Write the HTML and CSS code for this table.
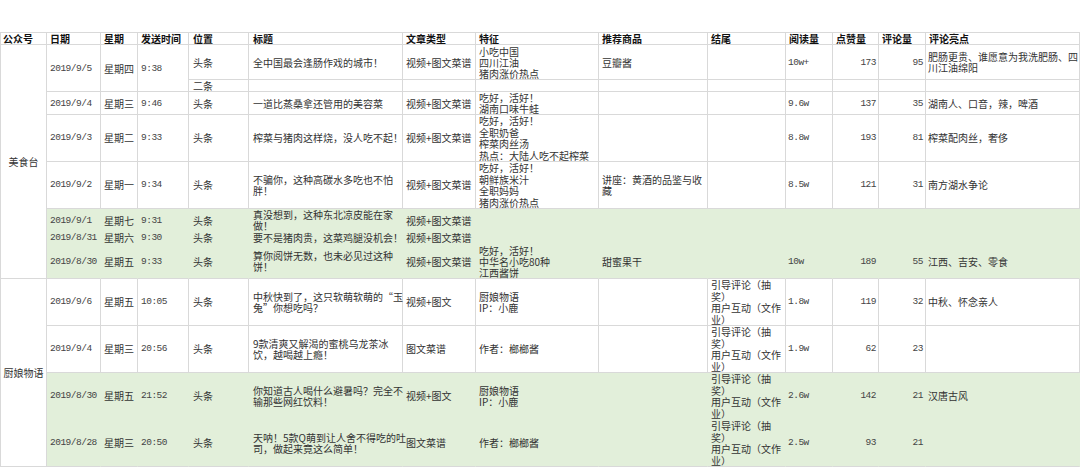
FILE: index.html
```html
<!DOCTYPE html>
<html lang="zh-CN">
<head>
<meta charset="utf-8">
<title>公众号文章统计</title>
<link rel="stylesheet" href="styles.css">
</head>
<body>
<div class="page">
<table class="sheet">
<colgroup>
<col class="c1"><col class="c2"><col class="c3"><col class="c4"><col class="c5"><col class="c6"><col class="c7">
<col class="c8"><col class="c9"><col class="c10"><col class="c11"><col class="c12"><col class="c13"><col class="c14">
</colgroup>
<tr class="hd">
<th class="acct-h">公众号</th><th>日期</th><th>星期</th><th>发送时间</th><th class="pos">位置</th><th class="pos">标题</th><th>文章类型</th><th>特征</th><th>推荐商品</th><th>结尾</th><th>阅读量</th><th>点赞量</th><th>评论量</th><th>评论亮点</th>
</tr>
<tr class="h35">
<td rowspan="8" class="acct">美食台</td>
<td rowspan="2" class="m">2019/9/5</td><td rowspan="2">星期四</td><td rowspan="2" class="m">9:38</td>
<td class="pos">头条</td><td class="pos">全中国最会逢肠作戏的城市！</td><td>视频+图文菜谱</td><td>小吃中国<br>四川江油<br>猪肉涨价热点</td><td>豆瓣酱</td><td></td><td class="m rd">10w+</td><td class="m r">173</td><td class="m r">95</td><td class="hl">肥肠更贵、谁愿意为我洗肥肠、四<br>川江油绵阳</td>
</tr>
<tr class="h12">
<td class="pos">二条</td><td></td><td></td><td></td><td></td><td></td><td></td><td></td><td></td><td></td>
</tr>
<tr class="h23">
<td class="m">2019/9/4</td><td>星期三</td><td class="m">9:46</td><td class="pos">头条</td><td class="pos">一道比蒸桑拿还管用的美容菜</td><td>视频+图文菜谱</td><td>吃好，活好！<br>湖南口味牛蛙</td><td></td><td></td><td class="m rd">9.6w</td><td class="m r">137</td><td class="m r">35</td><td class="hl">湖南人、口音，辣，啤酒</td>
</tr>
<tr class="h47">
<td class="m">2019/9/3</td><td>星期二</td><td class="m">9:33</td><td class="pos">头条</td><td class="pos">榨菜与猪肉这样烧，没人吃不起！</td><td>视频+图文菜谱</td><td>吃好，活好！<br>全职奶爸<br>榨菜肉丝汤<br>热点：大陆人吃不起榨菜</td><td></td><td></td><td class="m rd">8.8w</td><td class="m r">193</td><td class="m r">81</td><td class="hl">榨菜配肉丝，奢侈</td>
</tr>
<tr class="h47">
<td class="m">2019/9/2</td><td>星期一</td><td class="m">9:34</td><td class="pos">头条</td><td class="pos">不骗你，这种高碳水多吃也不怕<br>胖！</td><td>视频+图文菜谱</td><td>吃好，活好！<br>朝鲜族米汁<br>全职妈妈<br>猪肉涨价热点</td><td>讲座：黄酒的品鉴与收<br>藏</td><td></td><td class="m rd">8.5w</td><td class="m r">121</td><td class="m r">31</td><td class="hl">南方湖水争论</td>
</tr>
<tr class="h23 g">
<td class="m">2019/9/1</td><td>星期七</td><td class="m">9:31</td><td class="pos">头条</td><td class="pos">真没想到，这种东北凉皮能在家<br>做！</td><td>视频+图文菜谱</td><td></td><td></td><td></td><td></td><td></td><td></td><td></td>
</tr>
<tr class="h12 g">
<td class="m">2019/8/31</td><td>星期六</td><td class="m">9:30</td><td class="pos">头条</td><td class="pos">要不是猪肉贵，这菜鸡腿没机会！</td><td>视频+图文菜谱</td><td></td><td></td><td></td><td></td><td></td><td></td><td></td>
</tr>
<tr class="h35 g end">
<td class="m">2019/8/30</td><td>星期五</td><td class="m">9:33</td><td class="pos">头条</td><td class="pos">算你阅饼无数，也未必见过这种<br>饼！</td><td>视频+图文菜谱</td><td>吃好，活好！<br>中华名小吃80种<br>江西酱饼</td><td>甜蜜果干</td><td></td><td class="m rd">10w</td><td class="m r">189</td><td class="m r">55</td><td class="hl">江西、吉安、零食</td>
</tr>
<tr class="h47">
<td rowspan="4" class="acct">厨娘物语</td>
<td class="m">2019/9/6</td><td>星期五</td><td class="m">10:05</td><td class="pos">头条</td><td class="pos">中秋快到了，这只软萌软萌的“玉<br>兔”你想吃吗？</td><td>视频+图文</td><td>厨娘物语<br>IP：小鹿</td><td></td><td>引导评论（抽<br>奖）<br>用户互动（文作<br>业）</td><td class="m rd">1.8w</td><td class="m r">119</td><td class="m r">32</td><td class="hl">中秋、怀念亲人</td>
</tr>
<tr class="h47">
<td class="m">2019/9/4</td><td>星期三</td><td class="m">20:56</td><td class="pos">头条</td><td class="pos">9款清爽又解渴的蜜桃乌龙茶冰<br>饮，越喝越上瘾！</td><td>图文菜谱</td><td>作者：榔榔酱</td><td></td><td>引导评论（抽<br>奖）<br>用户互动（文作<br>业）</td><td class="m rd">1.9w</td><td class="m r">62</td><td class="m r">23</td><td class="hl"></td>
</tr>
<tr class="h47 g">
<td class="m">2019/8/30</td><td>星期五</td><td class="m">21:52</td><td class="pos">头条</td><td class="pos">你知道古人喝什么避暑吗？完全不<br>输那些网红饮料！</td><td>视频+图文</td><td>厨娘物语<br>IP：小鹿</td><td></td><td>引导评论（抽<br>奖）<br>用户互动（文作<br>业）</td><td class="m rd">2.6w</td><td class="m r">142</td><td class="m r">21</td><td class="hl">汉唐古风</td>
</tr>
<tr class="h47 g end">
<td class="m">2019/8/28</td><td>星期三</td><td class="m">20:50</td><td class="pos">头条</td><td class="pos">天呐！5款Q萌到让人舍不得吃的吐<br>司，做起来竟这么简单！</td><td>图文菜谱</td><td>作者：榔榔酱</td><td></td><td>引导评论（抽<br>奖）<br>用户互动（文作<br>业）</td><td class="m rd">2.5w</td><td class="m r">93</td><td class="m r">21</td><td class="hl"></td>
</tr>
</table>
</div>
</body>
</html>
```

FILE: styles.css
```css
html, body {
  margin: 0;
  padding: 0;
  background: #ffffff;
}
body {
  font-family: "Noto Sans CJK SC", "Noto Sans", sans-serif;
  font-size: 10px;
  color: #333333;
}
.page {
  padding-top: 32px;
}
.sheet {
  border-collapse: separate;
  border-spacing: 0;
  table-layout: fixed;
  width: 1080px;
  border-top: 1px solid #d9d9d9;
  border-left: 1px solid #d9d9d9;
}
.c1 { width: 46px; }
.c2 { width: 54px; }
.c3 { width: 37px; }
.c4 { width: 51px; }
.c5 { width: 60px; }
.c6 { width: 154px; }
.c7 { width: 73px; }
.c8 { width: 123px; }
.c9 { width: 109px; }
.c10 { width: 78px; }
.c11 { width: 47px; }
.c12 { width: 46px; }
.c13 { width: 47px; }
.c14 { width: 154px; }
.sheet th,
.sheet td {
  border-right: 1px solid #d9d9d9;
  border-bottom: 1px solid #d9d9d9;
  padding: 0 2px 0 3px;
  height: auto;
  line-height: 11px;
  white-space: nowrap;
  vertical-align: middle;
  text-align: left;
  font-weight: normal;
  overflow: visible;
}
.sheet th {
  font-weight: bold;
  color: #111111;
}
.hd { height: 11px; }
.h12 { height: 12px; }
.h23 { height: 23px; }
.h35 { height: 35px; }
.h47 { height: 47px; }
.h47 td {
  line-height: 11.5px;
}
.sheet .acct {
  text-align: center;
  padding: 0;
}
.sheet .acct-h {
  padding-left: 2px;
}
.sheet .pos {
  padding-left: 4px;
}
.m {
  font-family: "Liberation Mono", "DejaVu Sans Mono", monospace;
  font-size: 9.5px;
  letter-spacing: -0.5px;
  color: #444444;
}
.sheet .r {
  text-align: right;
  padding-right: 2px;
}
.sheet .rd {
  padding-left: 2px;
}
.sheet .hl {
  padding-left: 2px;
}
.g td {
  background: #e2efda;
  border-right-color: transparent;
  border-bottom-color: transparent;
}
.g.end td {
  border-bottom-color: #d9d9d9;
}
```
